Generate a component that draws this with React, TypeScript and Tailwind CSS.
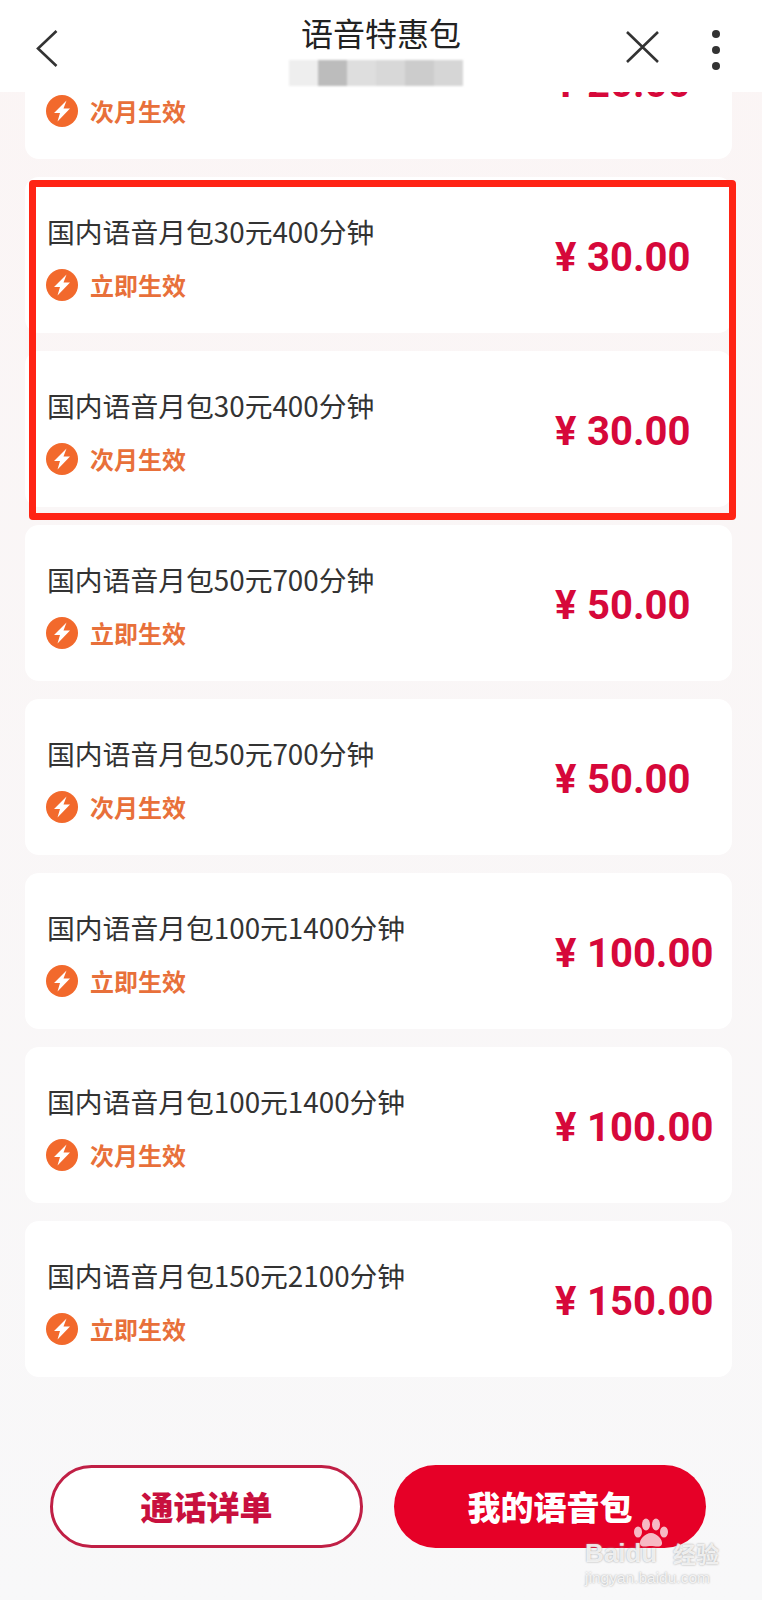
const cjk = { fontFamily: '"Noto Sans CJK SC", "Noto Sans", sans-serif' }
const num = { fontFamily: 'Roboto, "Noto Sans CJK SC", sans-serif' }

// first card is scrolled under the header, its name is never visible
const plans = [
  { name: "", when: "次月生效", price: "20.00", first: true },
  { name: "国内语音月包30元400分钟", when: "立即生效", price: "30.00" },
  { name: "国内语音月包30元400分钟", when: "次月生效", price: "30.00" },
  { name: "国内语音月包50元700分钟", when: "立即生效", price: "50.00" },
  { name: "国内语音月包50元700分钟", when: "次月生效", price: "50.00" },
  { name: "国内语音月包100元1400分钟", when: "立即生效", price: "100.00" },
  { name: "国内语音月包100元1400分钟", when: "次月生效", price: "100.00" },
  { name: "国内语音月包150元2100分钟", when: "立即生效", price: "150.00" },
]

const mosaic = ["bg-[#eeeeee]", "bg-[#bcbcbc]", "bg-[#dedede]", "bg-[#d8d8d8]", "bg-[#cccccc]", "bg-[#d6d6d6]"]

function Bolt() {
  return (
    <svg width="32" height="32" viewBox="0 0 32 32" className="shrink-0">
      <circle cx="16" cy="16" r="16" fill="#f2692c" />
      <path d="M20.5 5.5 L8 18 H14 L11.5 26.5 L24 13.5 H17.5 Z" fill="#fff" />
    </svg>
  )
}

function PlanCard({ name, when, price, first }: { name: string; when: string; price: string; first?: boolean }) {
  return (
    <div className={`h-[156px] shrink-0 bg-white rounded-[14px] flex items-center justify-between pl-[21px] ${first ? "-mt-[89px]" : ""}`}>
      <div className="flex flex-col mt-[6px]">
        <p className="h-[36px] text-[27.8px] leading-[36px] text-[#333333] pl-[1px]">{name}</p>
        <div className="flex items-center mt-[18px]">
          <Bolt />
          <span className="ml-[12px] text-[24px] leading-[36px] font-bold text-[#e8703a]">{when}</span>
        </div>
      </div>
      <div className="w-[177px] mt-[6px] flex items-center text-[#d6083a] font-bold text-[40px] leading-[48px]" style={num}>
        <span className="w-[32px]">¥</span>
        <span>{price}</span>
      </div>
    </div>
  )
}

export default function App() {
  return (
    <div className="relative w-[762px] h-[1600px] flex flex-col overflow-hidden bg-gradient-to-b from-[#fbf5f5] to-[#f8f8f9]" style={cjk}>
      <header className="relative z-10 h-[92px] shrink-0 bg-white flex px-[36px]">
        <div className="flex-1">
          <svg width="22" height="37" viewBox="0 0 22 37" className="mt-[30px]" fill="none" stroke="#333" strokeWidth="2.6">
            <path d="M20.5 1 L2 18.5 L20.5 36" />
          </svg>
        </div>
        <div className="flex flex-col items-center">
          <h1 className="text-[32px] leading-[44px] text-[#222222] mt-[10px] font-normal">语音特惠包</h1>
          <div className="flex mt-[6px] -ml-[10px] blur-[1px]">
            {mosaic.map((c) => (
              <div key={c} className={`w-[29px] h-[26px] ${c}`} />
            ))}
          </div>
        </div>
        <div className="flex-1 flex justify-end">
          <svg width="33" height="32" viewBox="0 0 33 32" className="mt-[31px]" fill="none" stroke="#333" strokeWidth="2.6">
            <path d="M1 1 L32 31 M32 1 L1 31" />
          </svg>
          <div className="ml-[53px] mr-[6px] mt-[30px] flex flex-col gap-[8px]">
            <div className="w-[8px] h-[8px] rounded-full bg-[#333333]" />
            <div className="w-[8px] h-[8px] rounded-full bg-[#333333]" />
            <div className="w-[8px] h-[8px] rounded-full bg-[#333333]" />
          </div>
        </div>
      </header>

      <main className="flex-1 min-h-0 flex flex-col gap-[18px] px-[25px] w-[757px]">
        {plans.map((p, i) => (
          <PlanCard key={i} {...p} />
        ))}
      </main>

      <footer className="shrink-0 flex gap-[31px] pl-[50px] pb-[52px]">
        <button className="w-[313px] h-[83px] rounded-full bg-white border-[3px] border-[#c01f45] text-[#c8103e] text-[33px] font-black">通话详单</button>
        <button className="w-[312px] h-[83px] rounded-full bg-[#e60027] text-white text-[33px] font-black">我的语音包</button>
      </footer>

      {/* red marker box */}
      <div className="absolute left-[29px] top-[180px] w-[707px] h-[340px] border-[7px] border-[#ff2415] rounded-[4px]" />

      {/* watermark */}
      <div className="absolute left-[585px] top-[1518px] w-[140px] text-white/80 [text-shadow:0_0_2px_#999999]">
        <svg width="40" height="30" viewBox="0 0 40 30" className="absolute left-[46px] top-[0px]" fill="#f7b9c4">
          <ellipse cx="7" cy="14" rx="4" ry="5.5" />
          <ellipse cx="15" cy="6.5" rx="4" ry="6" />
          <ellipse cx="25" cy="6.5" rx="4" ry="6" />
          <ellipse cx="33" cy="14" rx="4" ry="5.5" />
          <path d="M20 15 C14 15 8 22 9 26 C10 30 16 28 20 28 C24 28 30 30 31 26 C32 22 26 15 20 15 Z" />
        </svg>
        <div className="absolute left-0 top-[20px] flex items-center text-[26px] leading-[30px] font-bold whitespace-nowrap">
          <span className="w-[88px]" style={{ fontFamily: '"Liberation Sans", sans-serif' }}>Baidu</span>
          <span className="text-[23px]">经验</span>
        </div>
        <div className="absolute left-0 top-[51px] text-[15.5px] leading-[18px] whitespace-nowrap" style={{ fontFamily: '"Liberation Sans", sans-serif' }}>jingyan.baidu.com</div>
      </div>
    </div>
  )
}
